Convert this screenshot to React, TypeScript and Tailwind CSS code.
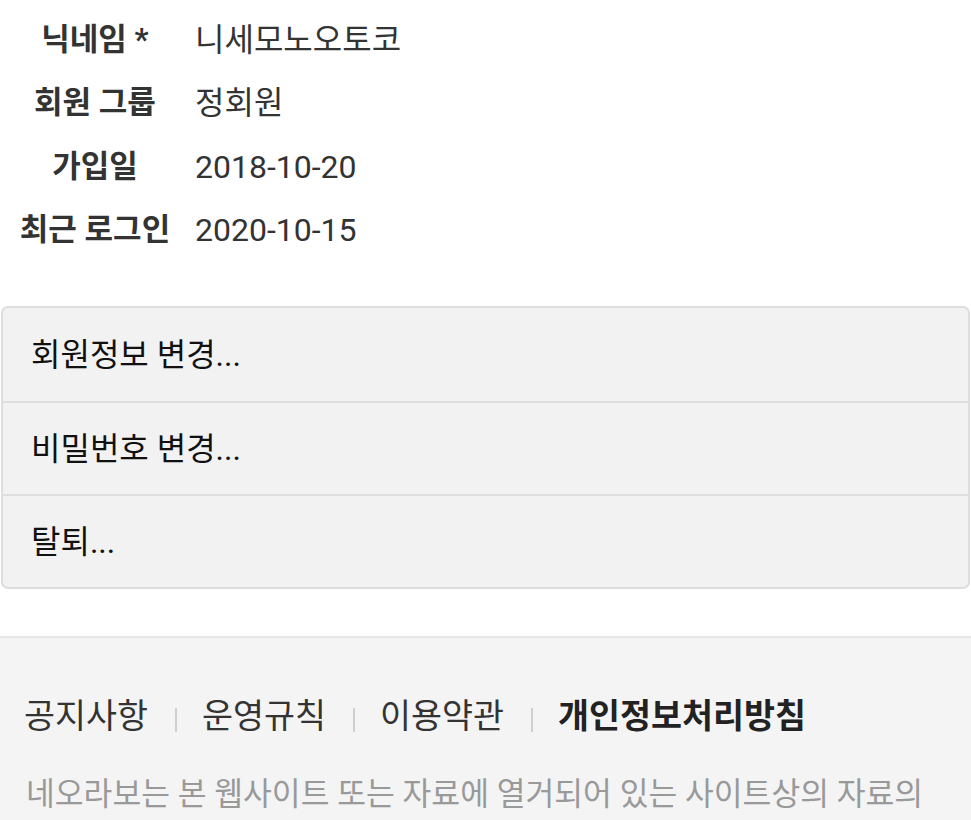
import React from "react";

const font = { fontFamily: "Roboto, 'Noto Sans CJK KR', sans-serif" };

const info: [string, string][] = [
  ["닉네임 *", "니세모노오토코"],
  ["회원 그룹", "정회원"],
  ["가입일", "2018-10-20"],
  ["최근 로그인", "2020-10-15"],
];

const actions = ["회원정보 변경...", "비밀번호 변경...", "탈퇴..."];

const links = ["공지사항", "운영규칙", "이용약관"];

export default function App() {
  return (
    <div className="w-[971px] h-[820px] overflow-hidden bg-white font-['Roboto','Noto_Sans_CJK_KR',sans-serif]" style={font}>
      <div className="pt-[8px]">
        {info.map(([k, v]) => (
          <div key={k} className="flex items-center h-[63.5px] text-[32px] text-[#333]">
            <div className="w-[190px] text-center font-bold text-[31px]">{k}</div>
            <div className="ml-[5px]">{v}</div>
          </div>
        ))}
      </div>

      <div className="mt-[44px] mx-[1px] border-2 border-[#dedede] rounded-[7px] bg-[#f2f2f2] overflow-hidden">
        {actions.map((a, i) => (
          <div
            key={a}
            className={`h-[93px] flex items-center pl-[28px] text-[32px] text-[#111] ${i > 0 ? "border-t-2 border-[#dedede]" : ""}`}
          >
            {a}
          </div>
        ))}
      </div>

      <div className="mt-[47px] border-t-2 border-[#e8e8e8] bg-[#f4f4f4] h-[200px] pt-[55px] px-[24px]">
        <div className="flex items-center h-[48px] text-[33.7px] text-[#333]">
          {links.map((l) => (
            <React.Fragment key={l}>
              <span>{l}</span>
              <span className="ml-[27px] mr-[25px] w-[2px] h-[24px] mt-[6px] bg-[#cfcfcf]" />
            </React.Fragment>
          ))}
          <span className="font-bold text-[#222]">개인정보처리방침</span>
        </div>
        <div className="mt-[30px] h-[48px] flex items-center text-[31.3px] text-[#999] whitespace-nowrap pl-[2px]">
          네오라보는 본 웹사이트 또는 자료에 열거되어 있는 사이트상의 자료의
        </div>
      </div>
    </div>
  );
}
